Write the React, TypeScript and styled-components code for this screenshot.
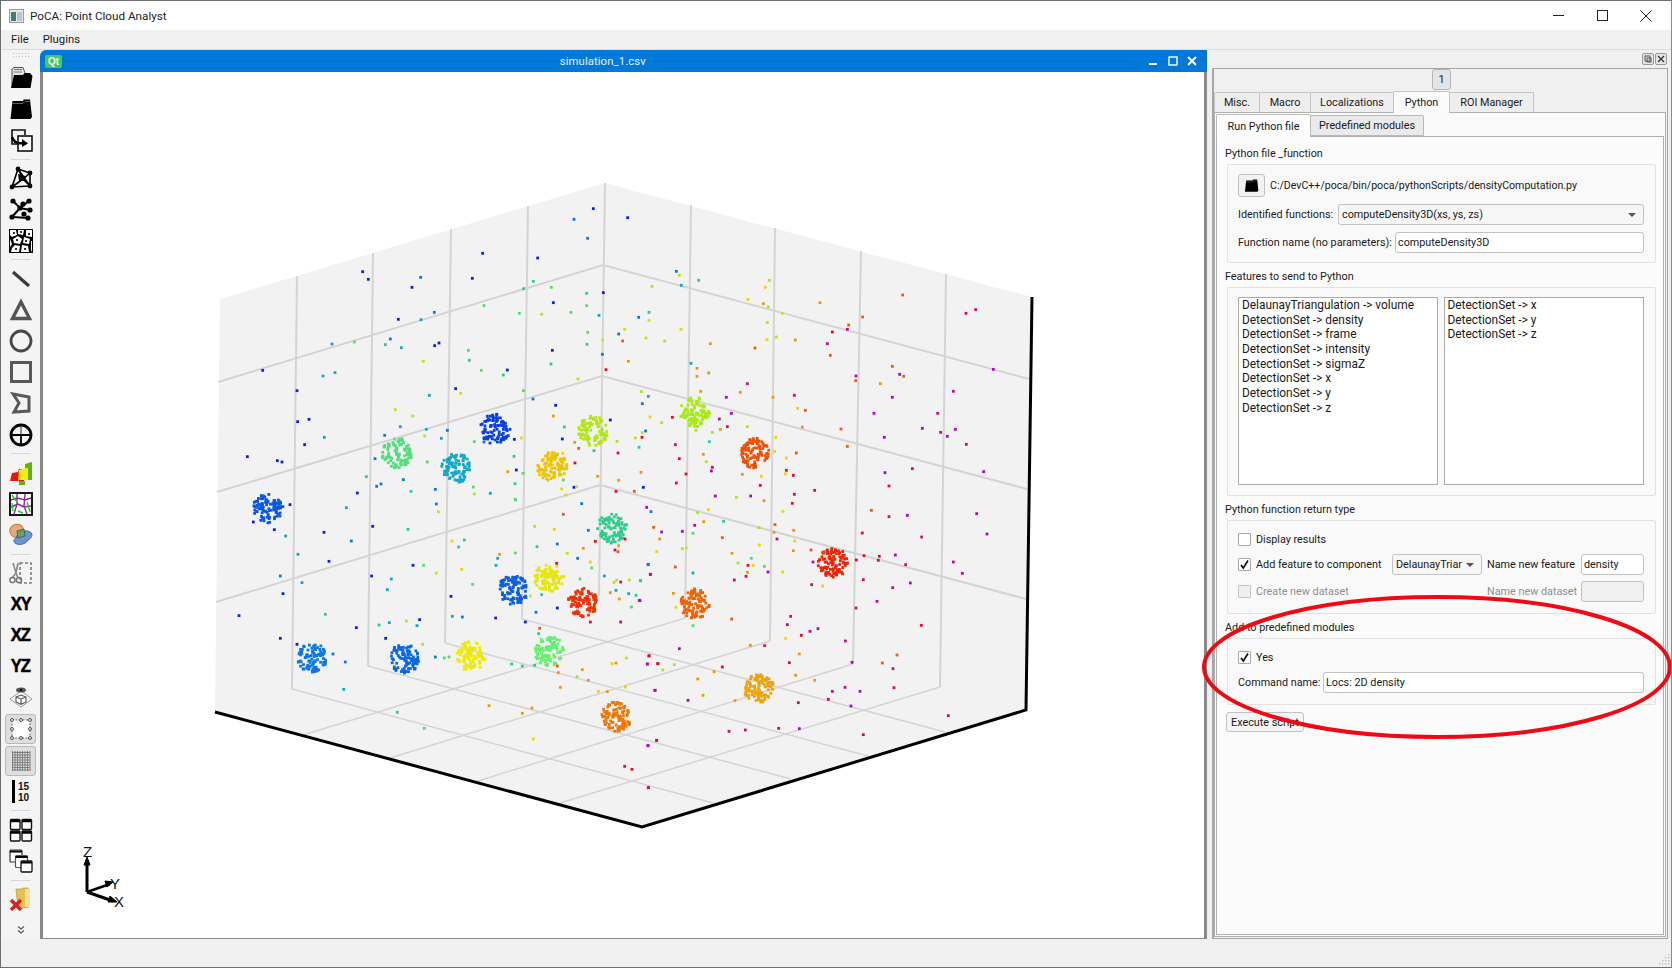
import React from "react";
import styled, { createGlobalStyle } from "styled-components";

const Global = createGlobalStyle`
  html, body { margin: 0; padding: 0; background: #f0f0f0; }
  body { font-family: Roboto, "Noto Sans", "Liberation Sans", sans-serif; font-size: 10.8px; color: #1a1a1a; overflow: hidden; }
  * { box-sizing: border-box; }
`;

const Win = styled.div`
  position: relative; width: 1672px; height: 968px; border: 1px solid #6e6e6e; border-right-color: #8a8a8a;
  display: flex; flex-direction: column; background: #f0f0f0; overflow: hidden;
`;
const TitleBar = styled.div`
  height: 29px; background: #fff; display: flex; align-items: center; padding: 0 3px 0 8px; flex: none;
`;
const AppTitle = styled.span`
  margin-left: 6px; font-size: 11.7px; color: #222; flex: 1;
`;
const WinBtn = styled.div`
  width: 44px; height: 29px; display: flex; align-items: center; justify-content: center;
`;
const MenuBar = styled.div`
  height: 20px; background: #f0f0f0; display: flex; align-items: center; padding-left: 10px; gap: 14px; flex: none; font-size: 11.3px;
  border-bottom: 1px solid #dcdcdc;
`;
const Main = styled.div`
  flex: 1; display: flex; min-height: 0;
`;
const ToolBar = styled.div`
  width: 39px; flex: none; display: flex; flex-direction: column; align-items: center; background: #f4f4f4;
`;
const Grip = styled.div`
  width: 17px; height: 12px; margin-top: 0; flex: none;
  background-image: radial-gradient(circle, #bdbdbd 0.7px, transparent 0.8px);
  background-size: 3px 3px; background-position: 0 2px; background-repeat: repeat; clip-path: inset(2px 0 3px 0);
`;
const Tool = styled.div<{ $on?: boolean }>`
  width: 31px; height: 31.2px; flex: none; display: flex; align-items: center; justify-content: center;
  border-radius: 3px;
  ${(p) => p.$on && "background:#dedede; border:1px solid #b8b8b8; height:30px; margin:.6px 0;"}
`;
const ToolSep = styled.div`
  width: 20px; height: 7px; flex: none; display: flex; align-items: center;
  &::before { content: ""; display: block; width: 100%; height: 1px; background: #d8d8d8; }
`;
const AxisLabel = styled.span`
  font-family: "Liberation Sans", sans-serif; font-weight: 700; font-size: 18px; color: #000; letter-spacing: -1.2px;
  -webkit-text-stroke: .5px #000; display: inline-block; transform: scaleX(.92);
`;
const ScaleBar = styled.div`
  display: flex; align-items: center; gap: 3px;
  &::before { content: ""; display: block; width: 3px; height: 23px; background: #000; }
`;
const ScaleNums = styled.div`
  font-family: "Liberation Sans", sans-serif; font-weight: 700; font-size: 10px; line-height: 11px; color: #111;
`;
const Sub = styled.div`
  width: 1167px; flex: none; display: flex; flex-direction: column; height: 891px;
`;
const SubTitle = styled.div`
  height: 22px; background: #0078d7; border-radius: 6px 0 0 0; display: flex; align-items: center; padding: 0 5px 0 5px; flex: none; color: #fff;
`;
const QtBadge = styled.div`
  width: 17px; height: 13px; background: #41cd52; color: #fff; font-family: "Liberation Sans", sans-serif; font-weight: 700; font-size: 10px;
  display: flex; align-items: center; justify-content: center; border-radius: 2px; flex: none;
`;
const SubName = styled.div`
  flex: 1; text-align: center; font-size: 11.3px; color: #e8f3ff; letter-spacing: .1px; padding-top: 1px;
`;
const SubBtn = styled.div`
  width: 19.5px; height: 16px; display: flex; align-items: center; justify-content: center;
`;
const Canvas = styled.div`
  flex: 1; background: #fff; border: 3px solid #8a8a8a; border-top: 0; min-height: 0; line-height: 0;
`;
const Splitter = styled.div`
  width: 5px; flex: none;
`;
const DockOuter = styled.div`
  width: 456px; flex: none; display: flex; flex-direction: column; height: 889px;
`;
const DockHead = styled.div`
  height: 18px; display: flex; justify-content: flex-end; align-items: center; gap: 1px; padding-right: 1px; flex: none;
`;
const FloatBtn = styled.div`
  width: 12px; height: 12px; border: 1px solid #9a9a9a; border-radius: 2px; background: #e6e6e6; display: flex; align-items: center; justify-content: center;
`;
const DockFrame = styled.div`
  flex: 1; border: 1px solid #a6a6a6; border-left-width: 2px; display: flex; flex-direction: column; min-height: 0; padding: 0 1px 1px 0; background: #f0f0f0;
`;
const PageTabRow = styled.div`
  height: 21px; display: flex; padding-left: 218px; flex: none;
`;
const PageTab = styled.div`
  width: 19px; height: 21px; border: 1px solid #b4b4b4; border-radius: 3px; background: #e4e4e4; text-align: center; line-height: 19px; font-size: 11px;
`;
const TabRow = styled.div`
  height: 22px; display: flex; align-items: flex-end; flex: none; padding-left: 0;
`;
const OuterTab = styled.div<{ $w: number; $on?: boolean }>`
  width: ${(p) => p.$w}px; height: ${(p) => (p.$on ? 22 : 20)}px; border: 1px solid #c4c4c4; border-bottom: 0; margin-left: -1px;
  background: ${(p) => (p.$on ? "#fbfbfb" : "#eeeeee")}; display: flex; align-items: center; justify-content: center;
  border-radius: 2px 2px 0 0; position: relative; z-index: ${(p) => (p.$on ? 1 : 0)}; font-size: 10.8px; margin-bottom: ${(p) => (p.$on ? "-1px" : "0")};
  &:first-child { margin-left: 0; }
`;
const OuterPane = styled.div`
  flex: 1; border: 1px solid #b0b0b0; background: #fafafa; padding: 0 1px 1px 1px; display: flex; flex-direction: column; min-height: 0;
`;
const InnerTabRow = styled.div`
  height: 23px; display: flex; align-items: flex-end; flex: none;
`;
const InnerTab = styled.div<{ $w: number; $on?: boolean }>`
  width: ${(p) => p.$w}px; height: ${(p) => (p.$on ? 23 : 21)}px; border: 1px solid #b9b9b9; border-bottom: ${(p) => (p.$on ? "0" : "1px solid #b9b9b9")};
  background: ${(p) => (p.$on ? "#fcfcfc" : "#eaeaea")}; display: flex; align-items: center; justify-content: center; border-radius: 2px 2px 0 0;
  margin-left: ${(p) => (p.$on ? 0 : -1)}px; margin-bottom: ${(p) => (p.$on ? "-1px" : "0")}; position: relative; z-index: ${(p) => (p.$on ? 1 : 0)};
`;
const InnerPane = styled.div`
  flex: 1; border: 1px solid #b0b0b0; background: #fbfbfb; padding: 3px 9px 0 9px; min-height: 0;
`;
const GroupTitle = styled.div`
  height: 17px; line-height: 14px; margin-top: 7px; padding-bottom: 3px; margin-left: -1px;
`;
const GroupBox = styled.div<{ $h: number }>`
  height: ${(p) => p.$h}px; border: 1px solid #e2e2e2; border-radius: 2px; margin-left: 1px; width: 429px; padding: 9px 11px 0 10px; background: #f9f9f9;
`;
const Row = styled.div<{ $top?: number; $h: number }>`
  display: flex; align-items: center; height: ${(p) => p.$h}px; margin-top: ${(p) => p.$top ?? 0}px;
`;
const FolderBtn = styled.div`
  width: 27px; height: 23px; border: 1px solid #c2c2c2; border-radius: 3px; background: #f2f2f2; display: flex; align-items: center; justify-content: center; margin-right: 5px;
`;
const PathText = styled.span`
  font-size: 10.6px;
`;
const Combo = styled.div<{ $w?: number }>`
  height: 21px; ${(p) => (p.$w ? `width:${p.$w}px;` : "flex:1;")} border: 1px solid #c2c2c2; border-radius: 3px; background: #f6f6f6;
  display: flex; align-items: center; padding: 0 7px 0 3px; justify-content: space-between; white-space: nowrap; overflow: hidden; flex-shrink: 0;
  &::after { content: ""; border: 4px solid transparent; border-top: 4px solid #555; border-bottom: 0; flex: none; margin-left: 4px; }
`;
const ComboText = styled.span`
  flex: 1; min-width: 0;
`;
const Field = styled.div<{ $w?: number; $off?: boolean }>`
  height: 21px; ${(p) => (p.$w ? `width:${p.$w}px;` : "flex:1;")} border: 1px solid #c2c2c2; border-radius: 3px;
  background: ${(p) => (p.$off ? "#f0f0f0" : "#fff")}; display: flex; align-items: center; padding-left: 2px; flex-shrink: 0;
`;
const Label = styled.span<{ $w?: number; $off?: boolean; $gap?: number }>`
  ${(p) => p.$w && `width:${p.$w}px;`} flex: none; color: ${(p) => (p.$off ? "#8f8f8f" : "inherit")}; white-space: nowrap;
  margin-left: ${(p) => p.$gap ?? 0}px;
`;
const Check = styled.div<{ $off?: boolean }>`
  width: 13px; height: 13px; border: 1px solid ${(p) => (p.$off ? "#c6c6c6" : "#a8a8a8")}; background: ${(p) => (p.$off ? "#efefef" : "#fff")}; flex: none; margin-right: 5px; border-radius: 1px;
  display: flex; align-items: center; justify-content: center;
`;
const Lists = styled.div`
  display: flex; gap: 6px;
`;
const ListBox = styled.div<{ $w: number }>`
  width: ${(p) => p.$w}px; height: 188px; border: 1px solid #ababab; background: #fff; padding: 0 3px; line-height: 14.67px; font-size: 11.9px;
`;
const ListItem = styled.div`
  height: 14.67px; white-space: nowrap;
`;
const ExecBtn = styled.div`
  width: 78px; height: 20px; margin-top: 7px; border: 1px solid #c2c2c2; border-radius: 3px; background: #f4f4f4; display: flex; align-items: center; justify-content: center;
`;
const StatusBar = styled.div`
  height: 28px; flex: none; background: #f0f0f0; display: flex; justify-content: flex-end; align-items: flex-end; padding: 0 1px 2px 0;
`;
const Ring = styled.svg`
  position: absolute; left: 0; top: 0; pointer-events: none;
`;

const COLORS: Record<string, string> = {
  b: "#0a22e0", B: "#0a78e0", c: "#10a8c8", t: "#22cc9c", g: "#55dd66", l: "#a8e818", y: "#e8d800",
  o: "#ee9a08", O: "#ee5a0a", r: "#e80a28", m: "#c80a80", p: "#a808c8",
};
const P8 = "b1180,116 B1122,148 b1283,143 B1163,205 b848,250 b1013,264 b488,305 b505,328 B662,322 b636,352 b817,325 t1000,334 t971,356 g1054,352 B703,427 b595,448 c663,449 g852,407 g958,430 l1025,433 g1113,427 t1160,370 b1210,368 b1060,398 g1160,407 c1197,436 c396,522 g463,516 t556,524 B571,507 c604,533 b704,527 b717,519 g805,541 t808,571 l670,574 g844,601 b922,600 t910,615 b1057,541 t1053,582 g1163,487 t1161,523 y1208,510 B1207,553 r1218,599 l1134,627 b188,601 c369,618 c405,608 b291,662 g970,662 b767,656 y782,670 c688,676 B999,687 b1067,706 o1060,738 l586,719 l638,738 c601,770 c679,778 B742,781 B554,796 l674,798 c724,805 b293,755 b327,748 c373,802 b314,824 b142,860 b232,872 b246,876 g823,815 B852,816 b943,808 y964,804 t1093,771 b1087,807 o1124,817 O1136,835 y1088,850 r1125,879 t1182,842 b1231,750 B525,866 g682,876 t942,859 b949,900 o923,905 g969,910 t945,941 t499,920 B610,929 B530,949 B543,942 B706,958 b472,969 t633,964 g820,951 l823,972 c871,970 o1193,919 g1090,930 b1122,952 y1130,950 y1085,957 y1098,975 g946,988 l1356,349 t1347,427 y1347,451 B1316,442 y1274,478 l1338,504 B1256,492 O1268,513 o1285,574 l1324,665 c1345,679 B1327,701 y1350,741 y1327,788 B1337,783 r1326,802 t1317,832 l1306,804 l1251,814 m1254,849 o1323,907 o1256,931 O1303,964 b1330,952 r1248,964";
const P9 = "B109,304 l118,316 c124,346 t176,331 l388,331 y376,352 y324,388 o370,401 l385,411 y427,430 o540,398 O788,375 O668,441 O626,465 r577,486 m622,478 m978,430 m1007,419 y123,478 l74,513 o211,521 l382,457 y381,509 l409,501 o466,510 O345,534 m562,521 O571,556 O757,589 p779,613 O791,619 p648,618 O647,632 o721,641 p1060,598 c153,580 o171,595 o206,609 o171,619 m322,641 o182,664 o301,667 p259,682 o399,682 r463,676 m940,664 p757,682 y473,715 O496,721 p274,730 p702,730 m893,730 m238,747 m262,770 o241,778 l322,770 o487,771 O603,777 p847,775 r902,787 p946,778 p922,799 p733,802 l65,758 l168,781 l217,787 t208,815 m979,823 r97,742 r106,824 y407,802 O622,829 r118,866 o190,853 l199,875 O469,849 y404,845 y439,864 r217,892 p214,903 r138,912 o307,913 y364,919 y436,912 r439,901 r460,916 p735,908 r817,896 p1031,905 r109,939 r361,946 r747,948 m226,978 l289,982 p332,978 r463,973 m524,961";
const P10 = "b270,44 c439,53 B709,42 y715,65 g946,30 b160,96 b223,119 c257,138 b372,127 B454,153 b518,109 t624,118 B1145,41 O1090,73 l1004,109 y1063,118 B1165,121 t1011,170 B1072,162 o1150,175 r1186,154 o1256,167 O1254,185 m1245,180 r1275,147 y756,153 t793,150 t776,171 o899,193 g946,189 c893,205 c888,226 l1102,190 B1133,205 y1171,216 g1175,234 c294,193 b387,214 b639,226 g671,226 y709,249 y785,238 B1345,223 m1351,253 c1213,258 l1250,270 l1242,277 m1262,276 l1288,270 t1321,272 B241,258 b515,258 c574,267 c562,299 c306,278 b249,311 g818,283 g1140,267 r1070,220 c1248,301 o1231,308 t1025,314 c1286,311 t1308,316 o1258,327 p1318,331 g1294,351 b753,319 y991,318 B1008,367 b1072,354 b117,377 t376,373 c757,379 B787,381 b887,384 b976,396 r1171,396 m1262,396 b469,413 c568,398 t537,405 l619,393 c651,407 b659,389 b557,445 b241,445 O1019,415 t1016,431 b291,463 B399,492 B436,516 l668,463 B706,501 g733,504 g747,501 t935,522 t967,528 t1004,526 O1072,528 o1075,548 l1131,560 o1165,571 o1147,539 y1236,521 o1248,519 l1279,504 r1347,498 m1342,522 r1374,521 c431,598 o1081,592 y1195,604 o1222,605 y1276,591 m1365,601 t592,667 o867,647 o967,670 o996,654 g673,715 y1000,747 r1370,751 p1344,767 r1274,829 r1296,838 r1345,893";
const P11 = "o372,32 r457,40 y429,64 O694,61 m747,80 p802,76 m1010,71 p1041,132 l173,68 y205,59 o191,95 t251,94 p20,52 B33,65 m164,106 p127,124 g159,130 O41,112 p65,126 o59,147 O247,143 l357,113 O405,104 o402,127 o461,121 m411,147 y464,153 r667,129 m845,141 y358,165 l127,176 y139,174 y50,185 o276,190 o460,182 O513,180 O552,185 r562,180 m519,216 r649,210 r672,197 r718,199 m715,211 p766,195 r797,224 m940,216 m967,250 B24,224 O106,231 m31,253 c159,249 l294,219 g334,205 r324,226 y340,226 g373,229 o322,247 p384,246 y428,246 r318,259 r283,270 r670,269 m515,284 y548,288 m758,293 p811,279 t2,272 o100,310 y108,352 p0,332 O275,387 m711,334 m648,354 r844,406 r452,379 m442,404 p534,416 m510,424 r484,436 y437,445 m616,453 g159,407 o331,466 r374,467 p118,476 r27,497 o478,492 O771,495 O727,519 m759,536 m448,518 p636,517 m22,522 r53,521 l103,524 l68,540 r247,531 o222,545 o467,556 o173,567 o524,571 p45,601 o189,616 p144,631 o285,632 m577,604 m615,592 p660,604 r762,593 r565,628 p633,648 m475,638 m925,677 m267,724 m316,720 m416,715 p478,716 r670,734 r50,751 p24,767 r25,893";

type Dot = { x: number; y: number; c: string };
const parse = (s: string, ox: number, oy: number): Dot[] =>
  s.split(" ").map((t) => {
    const [a, b] = t.slice(1).split(",").map(Number);
    return { x: ox + a / 3, y: oy + b / 3, c: COLORS[t[0]] };
  });
const SCATTER: Dot[] = [...parse(P8, 200, 170), ...parse(P9, 640, 170), ...parse(P10, 200, 490), ...parse(P11, 640, 490)];

const CLUSTERS: [number, number, string][] = [
  [495, 429, "#0a40e0"], [593, 431, "#b4e41c"], [397, 453, "#52de7c"], [456, 468, "#10a8cc"], [552, 467, "#eec400"],
  [695, 412, "#a8ea14"], [754, 453, "#ee5004"], [268, 508, "#0a58e0"], [612, 528, "#30cc8c"], [549, 578, "#e6e60a"],
  [513, 590, "#0a60e0"], [583, 602, "#ec3406"], [549, 651, "#66ee70"], [471, 656, "#eeea04"], [404, 659, "#0a68e4"],
  [312, 658, "#0a78ec"], [616, 717, "#ee7604"], [833, 563, "#ee2404"], [695, 604, "#ee6404"], [759, 689, "#eea408"],
];
let seed = 12345;
const rnd = () => {
  seed = (seed * 1664525 + 1013904223) % 4294967296;
  return seed / 4294967296;
};
const CLUSTER_DOTS: Dot[] = CLUSTERS.flatMap(([cx, cy, c]) =>
  Array.from({ length: 95 }, () => {
    const r = 15 * Math.sqrt(rnd());
    const a = rnd() * Math.PI * 2;
    return { x: cx + r * Math.cos(a), y: cy + r * Math.sin(a), c };
  })
);

const WALL_LINES = [
  "297,276 292,689", "373,253 368,666", "451,229 445,643", "528,206 522,619", "605,183 599,596",
  "691,205 685,618", "775,228 770,641", "861,251 853,664", "946,274 940,687",
  "218,382 603,265 1029,379", "217,492 602,376 1027,489", "216,602 600,485 1026,599",
];
const FLOOR_LINES = [
  "292,689 713,803", "368,666 791,779", "445,643 868,756", "522,619 945,732",
  "685,618 303,735", "770,641 390,758", "853,664 475,782", "940,687 560,803",
];

const Plot = () => (
  <svg width={1161} height={866} viewBox="43 72 1161 866">
    <polygon points="220,299 605,183 1032,297 1026,710 642,827 215,712" fill="#f2f2f2" />
    {WALL_LINES.map((p) => <polyline key={p} points={p} fill="none" stroke="#d4d4d4" strokeWidth={2} />)}
    {FLOOR_LINES.map((p) => <polyline key={p} points={p} fill="none" stroke="#d4d4d4" strokeWidth={1.5} />)}
    <polyline points="215,712 642,827 1026,710 1032,297" fill="none" stroke="#000" strokeWidth={3} />
    {CLUSTER_DOTS.map((d, i) => <rect key={i} x={d.x - 1.4} y={d.y - 1.4} width={2.8} height={2.8} fill={d.c} />)}
    {SCATTER.map((d, i) => <rect key={i} x={d.x - 1.4} y={d.y - 1.4} width={2.8} height={2.8} fill={d.c} />)}
    <g stroke="#000" fill="none" strokeWidth={3}>
      <path d="M87 892 V860" />
      <path d="M87 892 L110 884" strokeWidth={2.5} />
      <path d="M87 892 L113 901" />
    </g>
    <path d="M87 857 l-3 8 h6z M113 882 l-8 -1 l2 6z M117 902 l-7 -6 l-2 6z" fill="#000" stroke="#000" />
    <g fontFamily="Liberation Sans, sans-serif" fontSize={15} fill="#111">
      <text x={83} y={857}>Z</text>
      <text x={110} y={889}>Y</text>
      <text x={114} y={907}>X</text>
    </g>
  </svg>
);

const S = ({ children }: { children: React.ReactNode }) => (
  <svg width={24} height={24} viewBox="0 0 24 24">{children}</svg>
);
const Dots = ({ pts, r = 2.4 }: { pts: number[][]; r?: number }) => (
  <>{pts.map(([x, y]) => <circle key={`${x}-${y}`} cx={x} cy={y} r={r} fill="#000" />)}</>
);
const FolderShape = () => (
  <>
    <path d="M1.5 22 L3.5 4 H14 L14.5 2.5 H21 L23 20 L21.5 22 Z" fill="#000" />
    <path d="M3.5 6.5 H14 L16 4.5 H21.5" fill="none" stroke="#8a8a8a" strokeWidth={.7} />
  </>
);

const TOOLS: Record<string, React.ReactNode> = {
  open: (
    <S>
      <path d="M3 21 L3 3 L5 1.5 H14 L16 7 L6 20 Z" fill="#e4e4e4" stroke="#555" strokeWidth={1} />
      <path d="M5 3.5 H13 M4.5 6 H13" stroke="#777" strokeWidth={1} />
      <path d="M2 22 L5 9 H14 L16 7 H21 L23.5 10 L21.5 22 Z" fill="#000" />
    </S>
  ),
  folder: <S><FolderShape /></S>,
  swap: (
    <S>
      <path d="M8 16 H3 V2 H16 V7" fill="none" stroke="#111" strokeWidth={1.6} />
      <rect x={9} y={8} width={14} height={15} fill="#fff" stroke="#111" strokeWidth={1.6} />
      <path d="M3 9 C5 15 9 16 14 15" fill="none" stroke="#000" strokeWidth={2.4} />
      <path d="M13 11 L19 15.5 L13 19 Z" fill="#000" />
    </S>
  ),
  delaunay: (
    <S>
      <path d="M9 3 L21 7 L21 20 L3 21 Z M9 3 L14 13 L21 20 M21 7 L14 13 L3 21 M9 3 L21 20" fill="none" stroke="#000" strokeWidth={1.6} />
      <path d="M9 8 L16 10 L15 15 L10 15 Z" fill="#000" />
      <Dots pts={[[9, 3], [21, 7], [21, 20], [3, 21]]} />
    </S>
  ),
  graph: (
    <S>
      <path d="M4 4 L11 11 L20 4 M11 11 L21 13 M11 11 L3 20 L19 21" fill="none" stroke="#000" strokeWidth={2} />
      <Dots pts={[[4, 4], [11, 11], [14, 7], [20, 4], [21, 13], [3, 20], [19, 21], [15, 17]]} r={2.6} />
    </S>
  ),
  voronoi: (
    <S>
      <rect width={24} height={24} fill="#000" />
      <g fill="#fff">
        <path d="M1 1 H7 L8 6 L3 8 L1 6Z M9 1 H15 L14 6 L9 5Z M17 1 H23 V8 L17 7Z M4 10 L9 7 L13 10 L11 15 L5 14Z M15 8 L21 10 L20 15 L14 14Z M1 10 L3 15 L1 18Z M6 16 L11 17 L10 23 H2 L3 19Z M13 16 L19 17 L20 23 H12Z M22 12 L23 12 V23 L22 21Z" />
      </g>
      <Dots pts={[[5, 4], [12, 3], [20, 5], [8, 11], [17, 12], [7, 20], [16, 20]]} r={1.1} />
    </S>
  ),
  line: <S><path d="M4 5 L20 19" stroke="#3c3c3c" strokeWidth={3.2} /></S>,
  triangle: <S><path d="M12 4 L20.5 20.5 H3.5 Z" fill="none" stroke="#555" strokeWidth={3.4} /></S>,
  circle: <S><circle cx={12} cy={12} r={10} fill="none" stroke="#484848" strokeWidth={2.8} /></S>,
  square: <S><rect x={2.5} y={2.5} width={19} height={19} fill="none" stroke="#585858" strokeWidth={3} /></S>,
  poly: <S><path d="M4 3 L20 6 L20 20 L5 21 L10 12 Z" fill="none" stroke="#585858" strokeWidth={3} /></S>,
  target: <S><circle cx={12} cy={12} r={10} fill="none" stroke="#000" strokeWidth={2.8} /><path d="M2 12 H22 M12 12 V22" stroke="#000" strokeWidth={1.8} /><path d="M12 2 V12" stroke="#333" strokeWidth={1} /></S>,
  blocks: (
    <S>
      <path d="M1 20 L3 12 L9 11 L10 8 H15 V20 Z" fill="#f01010" />
      <path d="M9 20 L10 9 L16 7 L19 7 V19 H10 Z" fill="#f4ee10" />
      <path d="M16 3 L23 1 V19 H19 V7 H16Z M10 20 H16 V24 H10Z" fill="#58b80c" />
    </S>
  ),
  gridmap: (
    <S>
      <rect x={1} y={1} width={22} height={22} fill="#fff" stroke="#000" strokeWidth={1.8} />
      <path d="M2 8 L8 6 L16 8 L22 6 M8 2 L8 12 L5 22 M16 2 L15 14 L18 22 M2 15 L9 12 L15 15 L22 14" fill="none" stroke="#8a2a9a" strokeWidth={1.4} />
      <path d="M3 3 L7 9 M9 19 L14 21 M18 10 L21 20 M3 11 L4 19" fill="none" stroke="#20d020" strokeWidth={1.4} />
    </S>
  ),
  venn: (
    <S>
      <path d="M1 6 C2 1 10 0 13 3 C15 5 15 12 10 14 C5 16 0 12 1 6Z" fill="#e8a878" stroke="#c07030" />
      <path d="M7 15 C9 9 15 6 21 9 C25 11 22 16 19 17 C17 21 10 23 6 20 C4 18 5 16 7 15Z" fill="#6d94d8" stroke="#4060a8" />
      <path d="M8 8 L15 6 L16 13 L9 15Z" fill="#66a06a" stroke="#3c7040" />
    </S>
  ),
  scissors: (
    <S>
      <rect x={11} y={2} width={11} height={20} fill="none" stroke="#7c7c7c" strokeWidth={1.6} strokeDasharray="3 2" />
      <path d="M4 2 L7 12 L3 17 M9 2 L7 12 L9 17" fill="none" stroke="#888" strokeWidth={1.6} />
      <circle cx={3.5} cy={19} r={2.6} fill="none" stroke="#777" strokeWidth={1.5} />
      <circle cx={10} cy={19} r={2.6} fill="none" stroke="#777" strokeWidth={1.5} />
    </S>
  ),
  eye: (
    <S>
      <path d="M1 13 L12 5 L23 13 L12 21 Z" fill="#f8f8f8" stroke="#999" strokeWidth={1} />
      <ellipse cx={12} cy={4} rx={5} ry={2.6} fill="#555" />
      <circle cx={12} cy={4} r={1.2} fill="#000" />
      <path d="M7 11 L12 9 L17 11 V16 L12 18.5 L7 16 Z M7 11 L12 13 L17 11 M12 13 V18.5" fill="none" stroke="#555" strokeWidth={1.1} />
    </S>
  ),
  box: (
    <S>
      <rect x={3} y={3} width={18} height={18} fill="#fff" stroke="#666" strokeWidth={1} strokeDasharray="2 1.5" />
      {[[3, 3], [12, 3], [21, 3], [3, 12], [21, 12], [3, 21], [12, 21], [21, 21]].map(([x, y]) => (
        <circle key={`${x}${y}`} cx={x} cy={y} r={1.5} fill="#eee" stroke="#444" strokeWidth={.9} />
      ))}
    </S>
  ),
  grid: (
    <S>
      <path d="M3 3.5 H21 M3 6 H21 M3 8.5 H21 M3 11 H21 M3 13.5 H21 M3 16 H21 M3 18.5 H21 M3 21 H21 M3.5 2 V22 M6 2 V22 M8.5 2 V22 M11 2 V22 M13.5 2 V22 M16 2 V22 M18.5 2 V22 M21 2 V22" stroke="#777" strokeWidth={.9} />
    </S>
  ),
  tile: (
    <S>
      <rect x={1.5} y={1.5} width={9.5} height={10} rx={1} fill="#fff" stroke="#111" strokeWidth={1.4} />
      <rect x={13} y={1.5} width={9.5} height={10} rx={1} fill="#fff" stroke="#111" strokeWidth={1.4} />
      <rect x={1.5} y={13} width={9.5} height={10} rx={1} fill="#fff" stroke="#111" strokeWidth={1.4} />
      <rect x={13} y={13} width={9.5} height={10} rx={1} fill="#fff" stroke="#111" strokeWidth={1.4} />
      <path d="M1 3 H11 M13 3 H23 M1 14.5 H11 M13 14.5 H23" stroke="#000" strokeWidth={2.4} />
    </S>
  ),
  cascade: (
    <S>
      <rect x={1} y={1} width={12} height={12} rx={1} fill="#fff" stroke="#333" strokeWidth={1.2} />
      <rect x={6.5} y={6.5} width={12} height={12} rx={1} fill="#fff" stroke="#555" strokeWidth={1.2} />
      <rect x={12} y={12} width={11} height={11} rx={1} fill="#fff" stroke="#111" strokeWidth={1.3} />
      <path d="M1 2.5 H13 M6.5 8 H18.5 M12 13.5 H23" stroke="#000" strokeWidth={2} />
    </S>
  ),
  del: (
    <S>
      <path d="M7 2 H13 L14 1 H19 L20 4 V20 L9 22 Z" fill="#e8c050" stroke="#b08a20" strokeWidth={.6} />
      <path d="M16 2 H21 V20 H16 Z" fill="#f4e090" />
      <path d="M2 13 L12 23 M12 13 L2 23" stroke="#d82020" strokeWidth={3.4} />
    </S>
  ),
};

const Chevrons = () => (
  <svg width={10} height={10} viewBox="0 0 10 10">
    <path d="M2 1.5 L5 4 L8 1.5 M2 5.5 L5 8 L8 5.5" fill="none" stroke="#555" strokeWidth={1.1} />
  </svg>
);
const Tick = () => (
  <svg width={11} height={11} viewBox="0 0 11 11"><path d="M2 6 L4.3 9 L9 1.5" fill="none" stroke="#111" strokeWidth={1.7} /></svg>
);

const Toolbar = () => {
  const t = (k: string, on?: boolean) => <Tool key={k} $on={on}>{TOOLS[k]}</Tool>;
  return (
    <ToolBar>
      <Grip />
      {t("open")}{t("folder")}{t("swap")}
      <ToolSep />
      {t("delaunay")}{t("graph")}{t("voronoi")}
      <ToolSep />
      {t("line")}{t("triangle")}{t("circle")}{t("square")}{t("poly")}{t("target")}
      <ToolSep />
      {t("blocks")}{t("gridmap")}{t("venn")}
      <ToolSep />
      {t("scissors")}
      <Tool><AxisLabel>XY</AxisLabel></Tool>
      <Tool><AxisLabel>XZ</AxisLabel></Tool>
      <Tool><AxisLabel>YZ</AxisLabel></Tool>
      {t("eye")}{t("box", true)}{t("grid", true)}
      <Tool><ScaleBar><ScaleNums>15<br />10</ScaleNums></ScaleBar></Tool>
      <ToolSep />
      {t("tile")}{t("cascade")}
      <ToolSep />
      {t("del")}
      <Tool><Chevrons /></Tool>
    </ToolBar>
  );
};

const LEFT = ["DelaunayTriangulation -> volume", "DetectionSet -> density", "DetectionSet -> frame", "DetectionSet -> intensity", "DetectionSet -> sigmaZ", "DetectionSet -> x", "DetectionSet -> y", "DetectionSet -> z"];
const RIGHT = ["DetectionSet -> x", "DetectionSet -> y", "DetectionSet -> z"];

export default function App() {
  return (
    <>
      <Global />
      <Win>
        <TitleBar>
          <svg width={15} height={14} viewBox="0 0 15 14">
            <rect x={.5} y={.5} width={14} height={13} fill="#e8e8e8" stroke="#9a9a9a" />
            <rect x={2} y={3} width={5} height={9} fill="#3d7f78" />
            <rect x={8} y={3} width={5} height={9} fill="#b9c6cc" />
          </svg>
          <AppTitle>PoCA: Point Cloud Analyst</AppTitle>
          <WinBtn><svg width={11} height={2}><rect width={11} height={1} fill="#222" /></svg></WinBtn>
          <WinBtn><svg width={11} height={11}><rect x={.5} y={.5} width={10} height={10} fill="none" stroke="#222" /></svg></WinBtn>
          <WinBtn><svg width={12} height={12}><path d="M.5 .5 L11.5 11.5 M11.5 .5 L.5 11.5" stroke="#222" /></svg></WinBtn>
        </TitleBar>
        <MenuBar><span>File</span><span>Plugins</span></MenuBar>
        <Main>
          <Toolbar />
          <Sub>
            <SubTitle>
              <QtBadge>Qt</QtBadge>
              <SubName>simulation_1.csv</SubName>
              <SubBtn><svg width={10} height={10}><rect x={1} y={7} width={8} height={2} fill="#fff" /></svg></SubBtn>
              <SubBtn><svg width={10} height={10}><rect x={1} y={1} width={8} height={8} fill="none" stroke="#fff" strokeWidth={1.4} /></svg></SubBtn>
              <SubBtn><svg width={10} height={10}><path d="M1 1 L9 9 M9 1 L1 9" stroke="#fff" strokeWidth={2} /></svg></SubBtn>
            </SubTitle>
            <Canvas><Plot /></Canvas>
          </Sub>
          <Splitter />
          <DockOuter>
            <DockHead>
              <FloatBtn><svg width={8} height={8}><rect x={1} y={1} width={5} height={5} fill="none" stroke="#555" /><rect x={3} y={3} width={4} height={4} fill="none" stroke="#555" /></svg></FloatBtn>
              <FloatBtn><svg width={8} height={8}><path d="M1 1 L7 7 M7 1 L1 7" stroke="#333" strokeWidth={1.4} /></svg></FloatBtn>
            </DockHead>
            <DockFrame>
              <PageTabRow><PageTab>1</PageTab></PageTabRow>
              <TabRow>
                <OuterTab $w={46}>Misc.</OuterTab>
                <OuterTab $w={52}>Macro</OuterTab>
                <OuterTab $w={84}>Localizations</OuterTab>
                <OuterTab $w={57} $on>Python</OuterTab>
                <OuterTab $w={85}>ROI Manager</OuterTab>
              </TabRow>
              <OuterPane>
                <InnerTabRow>
                  <InnerTab $w={95} $on>Run Python file</InnerTab>
                  <InnerTab $w={114}>Predefined modules</InnerTab>
                </InnerTabRow>
                <InnerPane>
                  <GroupTitle>Python file _function</GroupTitle>
                  <GroupBox $h={99}>
                    <Row $h={23}>
                      <FolderBtn>
                        <svg width={17} height={15} viewBox="0 0 24 24"><FolderShape /></svg>
                      </FolderBtn>
                      <PathText>C:/DevC++/poca/bin/poca/pythonScripts/densityComputation.py</PathText>
                    </Row>
                    <Row $top={7} $h={21}>
                      <Label $w={100}>Identified functions:</Label>
                      <Combo><ComboText>computeDensity3D(xs, ys, zs)</ComboText></Combo>
                    </Row>
                    <Row $top={7} $h={20}>
                      <Label $w={157}>Function name (no parameters):</Label>
                      <Field>computeDensity3D</Field>
                    </Row>
                  </GroupBox>
                  <GroupTitle>Features to send to Python</GroupTitle>
                  <GroupBox $h={209}>
                    <Lists>
                      <ListBox $w={200}>{LEFT.map((x) => <ListItem key={x}>{x}</ListItem>)}</ListBox>
                      <ListBox $w={201}>{RIGHT.map((x) => <ListItem key={x}>{x}</ListItem>)}</ListBox>
                    </Lists>
                  </GroupBox>
                  <GroupTitle>Python function return type</GroupTitle>
                  <GroupBox $h={94}>
                    <Row $top={-1} $h={20}>
                      <Check />
                      <Label>Display results</Label>
                    </Row>
                    <Row $top={5} $h={21}>
                      <Check><Tick /></Check>
                      <Label $w={136}>Add feature to component</Label>
                      <Combo $w={90}><ComboText>DelaunayTriar</ComboText></Combo>
                      <Label $w={94} $gap={5}>Name new feature</Label>
                      <Field $w={63}>density</Field>
                    </Row>
                    <Row $top={6} $h={21}>
                      <Check $off />
                      <Label $w={226} $off>Create new dataset</Label>
                      <Label $w={94} $off $gap={5}>Name new dataset</Label>
                      <Field $w={63} $off />
                    </Row>
                  </GroupBox>
                  <GroupTitle>Add to predefined modules</GroupTitle>
                  <GroupBox $h={67}>
                    <Row $top={-1} $h={20}>
                      <Check><Tick /></Check>
                      <Label>Yes</Label>
                    </Row>
                    <Row $top={5} $h={21}>
                      <Label $w={85}>Command name:</Label>
                      <Field>Locs: 2D density</Field>
                    </Row>
                  </GroupBox>
                  <ExecBtn>Execute script</ExecBtn>
                </InnerPane>
              </OuterPane>
            </DockFrame>
          </DockOuter>
        </Main>
        <StatusBar>
          <svg width={12} height={12} viewBox="0 0 12 12" fill="#bdbdbd">
            <rect x={10} y={1} width={1.4} height={1.4} /><rect x={7} y={4} width={1.4} height={1.4} /><rect x={10} y={4} width={1.4} height={1.4} />
            <rect x={4} y={7} width={1.4} height={1.4} /><rect x={7} y={7} width={1.4} height={1.4} /><rect x={10} y={7} width={1.4} height={1.4} />
            <rect x={1} y={10} width={1.4} height={1.4} /><rect x={4} y={10} width={1.4} height={1.4} /><rect x={7} y={10} width={1.4} height={1.4} /><rect x={10} y={10} width={1.4} height={1.4} />
          </svg>
        </StatusBar>
        <Ring width={1672} height={968} viewBox="1 1 1672 968">
          <ellipse cx={1437} cy={667} rx={233} ry={70} fill="none" stroke="#ee0a14" strokeWidth={4} />
        </Ring>
      </Win>
    </>
  );
}
